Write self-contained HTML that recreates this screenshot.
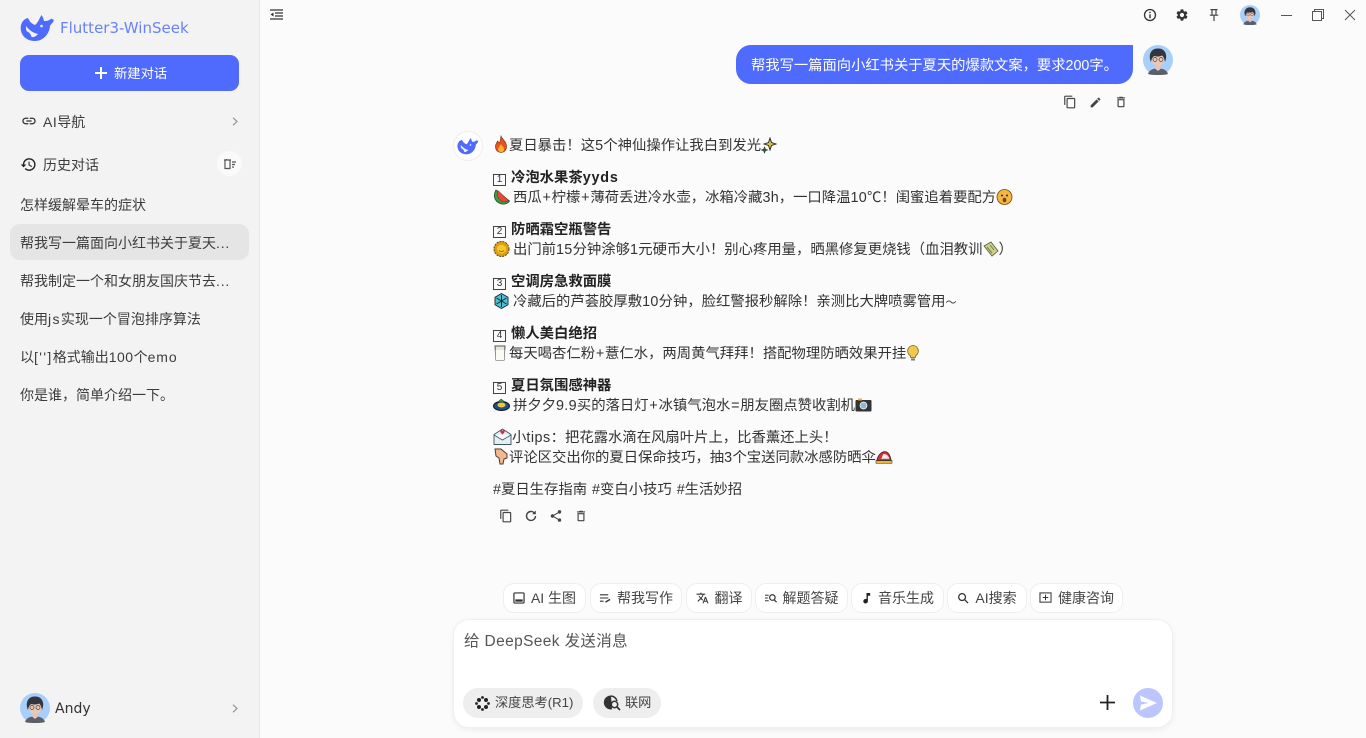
<!DOCTYPE html>
<html lang="zh"><head><meta charset="utf-8"><title>Flutter3-WinSeek</title>
<style>
*{box-sizing:border-box}
html,body{margin:0;width:1366px;height:738px;overflow:hidden;background:#fbfbfb;font-family:"Liberation Sans","Noto Sans CJK SC",sans-serif;color:#333;font-size:14px}
.a{position:absolute}
.t{position:absolute;white-space:nowrap;line-height:20px;height:20px;color:#333;font-size:14.35px;margin-top:1px}
.t svg{display:inline-block;vertical-align:-3px}
.b{font-weight:700;color:#222}
.p{padding:0 .8px}
.d{letter-spacing:.3px}
#side{left:0;top:0;width:260px;height:738px;background:#f3f3f3;border-right:1px solid #e8e8e8}
.h{left:20px;color:#3c3c3c;font-size:14px;line-height:20px;white-space:nowrap}
.chip{position:absolute;top:583px;height:30px;border:1px solid #eeeeee;border-radius:11px;background:#fff;display:flex;align-items:center;justify-content:center;gap:6px;font-size:14px;color:#444;white-space:nowrap}
.pill{position:absolute;top:688px;height:30px;border-radius:15px;background:#eeeeee;display:flex;align-items:center;font-size:14px;color:#444;white-space:nowrap}
.pill span{font-size:13.2px;position:relative;top:-1.5px}
.num{display:inline-block;width:13px;height:12px;border:1px solid #444;font:400 10px/10px "Liberation Sans",sans-serif;text-align:center;vertical-align:0;margin:0 5px 0 0;color:#333}
svg{display:block;overflow:visible}
</style></head><body>
<svg width="0" height="0" style="position:absolute"><defs>
<symbol id="av" viewBox="0 0 30 30"><circle cx="15" cy="15" r="15" fill="#a8cffc"/><path d="M5 29c1-4 5-5.500 10-5.500s9 1.500 10 5.500c-3 1-6.500 1-10 1s-7 0-10-1z" fill="#5b6068"/><path d="M12.500 18h5v6l-2.500 2-2.500-2z" fill="#e8c4b4"/><ellipse cx="15" cy="14" rx="6.500" ry="7" fill="#e9c8b8"/><path d="M8 17C4.500 9 9 3 15 3.500c6-.5 10.500 5.500 7 13.500-.5-3-1.500-5.500-3-6.500-3 1.500-6 1-7.500.5C10 11.500 8.500 13.500 8 17z" fill="#33353f"/><circle cx="12" cy="14.500" r="2" fill="none" stroke="#444" stroke-width=".7"/><circle cx="18" cy="14.500" r="2" fill="none" stroke="#444" stroke-width=".7"/></symbol>
<symbol id="wh" viewBox="0 0 35 27"><path d="M.7 13C.7 8 3.500 4 8 3c1.500 3.500 4 6 7 7 3-2 4-6 6.500-10 1.500 2 2 4 2.500 6 2 0 5 0 7-2.500L34 5c-1 3-3 4-4 6-.5 7-6 15-15 15C7 26 .7 21 .7 13z" fill="#4f6bfe"/><path d="M6 11c3 4 7 7 12 8-2.500 3-5 3.500-6.500 3-.5-3-2.500-5-4.500-5.500-1-1.500-1.200-3.500-1-5.500z" fill="#f3f3f3"/><circle cx="21.500" cy="11" r="1.300" fill="#f3f3f3"/></symbol>
<symbol id="copy" viewBox="0 0 24 24"><path d="M16 1H4c-1.100 0-2 .9-2 2v14h2V3h12V1zm3 4H8c-1.100 0-2 .9-2 2v14c0 1.100.9 2 2 2h11c1.100 0 2-.9 2-2V7c0-1.100-.9-2-2-2zm0 16H8V7h11v14z" fill="#444"/></symbol>
<symbol id="del" viewBox="0 0 24 24"><path d="M6 19c0 1.100.9 2 2 2h8c1.100 0 2-.9 2-2V7H6v12zM8 9h8v10H8V9zm7.500-5-1-1h-5l-1 1H5v2h14V4z" fill="#444"/></symbol>
<symbol id="chev" viewBox="0 0 6 9"><path d="M1 .7 5 4.500 1 8.300" fill="none" stroke="#9a9a9a" stroke-width="1.300"/></symbol>
</defs></svg>

<div id="side" class="a">
<svg class="a" style="left:20px;top:15px" width="35" height="27"><use href="#wh"/></svg>
<div class="a" style="left:60px;top:18px;line-height:20px;color:#6a82f8;font-family:'DejaVu Sans',sans-serif;font-size:15px;white-space:nowrap">Flutter3-WinSeek</div>
<div class="a" style="left:20px;top:55px;width:219px;height:36px;background:#4f6bfe;border-radius:9px"></div>
<svg class="a" style="left:95px;top:67px" width="12" height="12"><path d="M6 0v12M0 6h12" stroke="#fff" stroke-width="2"/></svg>
<div class="a" style="left:114px;top:64px;color:#fff;line-height:20px;font-size:13.3px;white-space:nowrap">新建对话</div>

<svg class="a" style="left:21px;top:113px" width="16" height="16" viewBox="0 0 24 24"><path d="M3.900 12c0-1.710 1.390-3.100 3.100-3.100h4V7H7c-2.760 0-5 2.240-5 5s2.240 5 5 5h4v-1.900H7c-1.710 0-3.100-1.390-3.100-3.100zM8 13h8v-2H8v2zm9-6h-4v1.900h4c1.710 0 3.100 1.390 3.100 3.100s-1.390 3.100-3.100 3.100h-4V17h4c2.760 0 5-2.240 5-5s-2.240-5-5-5z" fill="#333"/></svg>
<div class="a h" style="left:43px;top:112px"><span style="letter-spacing:.5px">AI</span>导航</div>
<svg class="a" style="left:232px;top:117px" width="6" height="9"><use href="#chev"/></svg>
<svg class="a" style="left:20px;top:156px" width="17" height="17" viewBox="0 0 24 24"><path d="M13 3a9 9 0 0 0-9 9H1l3.890 3.890.07.140L9 12H6a7 7 0 1 1 2.050 4.950l-1.420 1.420A9 9 0 1 0 13 3zm-1 5v5l4.280 2.540.72-1.210-3.500-2.080V8H12z" fill="#222"/></svg>
<div class="a h" style="left:43px;top:155px">历史对话</div>
<div class="a" style="left:217px;top:151px;width:25px;height:25px;border-radius:50%;background:#fafafa"></div>
<svg class="a" style="left:224px;top:159px" width="12" height="10" viewBox="0 0 12 10"><path d="M0 1h7M1 1.500V9.500H6V1.500M2.500 1V0M8 3h4M8 5.500h3M8 8h2" fill="none" stroke="#555" stroke-width="1.200"/></svg>

<div class="a" style="left:10px;top:224px;width:239px;height:36px;border-radius:10px;background:#e5e5e5"></div>
<div class="a h" style="top:195px">怎样缓解晕车的症状</div>
<div class="a h" style="top:233px">帮我写一篇面向小红书关于夏天<span style="letter-spacing:.8px">...</span></div>
<div class="a h" style="top:271px">帮我制定一个和女朋友国庆节去<span style="letter-spacing:.8px">...</span></div>
<div class="a h" style="top:309px">使用<span style="letter-spacing:1.4px">js</span>实现一个冒泡排序算法</div>
<div class="a h" style="top:347px">以<span style="letter-spacing:1.4px">['']</span>格式输出<span style="letter-spacing:.5px">100</span>个<span style="letter-spacing:.9px">emo</span></div>
<div class="a h" style="top:385px">你是谁，简单介绍一下。</div>

<svg class="a" style="left:20px;top:693px" width="30" height="30"><use href="#av"/></svg>
<div class="a" style="left:55px;top:699px;line-height:20px;color:#333;font-family:'DejaVu Sans',sans-serif;font-size:14px">Andy</div>
<svg class="a" style="left:232px;top:704px" width="6" height="9"><use href="#chev"/></svg>
</div>

<svg class="a" style="left:269px;top:8px" width="14" height="14" viewBox="0 0 14 14"><path d="M1 2h13M6 5h8M6 8h8M1 11h13" stroke="#333" stroke-width="1.200"/><path d="M4.500 4.500 1.500 6.500l3 2z" fill="#333"/></svg>

<svg class="a" style="left:1143px;top:8px" width="14" height="14" viewBox="0 0 14 14"><circle cx="7" cy="7" r="5.500" fill="none" stroke="#333" stroke-width="1.300"/><path d="M7 6.200v4M7 3.800v1.300" stroke="#333" stroke-width="1.400"/></svg>
<svg class="a" style="left:1175px;top:8px" width="14" height="14" viewBox="0 0 24 24"><path d="M19.140 12.940c.04-.3.060-.61.060-.94 0-.32-.02-.64-.07-.94l2.030-1.580a.49.49 0 0 0 .12-.61l-1.920-3.320a.49.49 0 0 0-.59-.22l-2.390.96c-.5-.38-1.030-.7-1.620-.94l-.36-2.540a.48.48 0 0 0-.48-.41h-3.840a.48.48 0 0 0-.47.41l-.36 2.540c-.59.24-1.130.57-1.620.94l-2.390-.96a.48.48 0 0 0-.59.22L2.740 8.870a.48.48 0 0 0 .12.61l2.030 1.580c-.05.3-.09.63-.09.94s.02.64.07.94l-2.030 1.580a.49.49 0 0 0-.12.61l1.920 3.320c.12.22.37.29.59.22l2.390-.96c.5.38 1.030.7 1.620.94l.36 2.540c.05.24.24.41.48.41h3.840c.24 0 .44-.17.47-.41l.36-2.540c.59-.24 1.130-.56 1.620-.94l2.390.96c.22.08.47 0 .59-.22l1.920-3.320a.48.48 0 0 0-.12-.61l-2.010-1.580zM12 15.600a3.600 3.600 0 1 1 0-7.200 3.600 3.600 0 0 1 0 7.200z" fill="#333"/></svg>
<svg class="a" style="left:1209px;top:9px" width="10" height="12" viewBox="0 0 10 12"><path d="M1.500 .6h7M3 .6v5M7 .6v5M.8 6.200h8.400M5 6.200V12" fill="none" stroke="#444" stroke-width="1.200"/></svg>
<svg class="a" style="left:1240px;top:5px" width="20" height="20"><use href="#av"/></svg>
<svg class="a" style="left:1281px;top:15px" width="11" height="1"><path d="M0 .5h11" stroke="#555"/></svg>
<svg class="a" style="left:1312px;top:9px" width="12" height="12" viewBox="0 0 12 12"><path d="M.5 2.500h9v9h-9zM2.500 2.500V.5h9v9H9.500" fill="none" stroke="#555"/></svg>
<svg class="a" style="left:1345px;top:10px" width="10" height="10"><path d="M0 0l10 10M10 0L0 10" stroke="#555"/></svg>

<div class="a" style="left:736px;top:45px;width:397px;height:39px;background:#4f6bfe;border-radius:15px 0 15px 15px"></div>
<div class="a" style="left:751px;top:56px;color:#fff;line-height:20px;white-space:nowrap;font-size:14.3px">帮我写一篇面向小红书关于夏天的爆款文案，要求200字。</div>
<svg class="a" style="left:1143px;top:45px" width="30" height="30"><use href="#av"/></svg>
<svg class="a" style="left:1063px;top:95px" width="14" height="14"><use href="#copy"/></svg>
<svg class="a" style="left:1089px;top:96px" width="13" height="13" viewBox="0 0 24 24"><path d="M3 17.250V21h3.750L17.810 9.940l-3.750-3.750L3 17.250zM20.710 7.040a1 1 0 0 0 0-1.410l-2.340-2.340a1 1 0 0 0-1.410 0l-1.830 1.830 3.750 3.750 1.830-1.830z" fill="#444"/></svg>
<svg class="a" style="left:1114px;top:95px" width="14" height="14"><use href="#del"/></svg>

<div class="a" style="left:453px;top:131px;width:30px;height:30px;border-radius:50%;background:#fff;border:1px solid #eee"></div>
<svg class="a" style="left:457px;top:138px" width="22" height="17"><use href="#wh"/></svg>

<div class="t" style="left:493px;top:135px"><svg width="16" height="17" viewBox="0 0 16 17"><path d="M8 0c1 3 5 5 5.500 9.500C14 14 11 16.500 8 16.500S2 14 2.500 9.500C3 7.500 4 6.500 4.500 5 5.500 6 6 6.500 6.500 7 7.500 5 7.500 2.500 8 0z" fill="#e8531d" stroke="#7a2a10" stroke-width=".6"/><path d="M8 8c1 2 3 3 3 5.500S9 16 8 16s-3-1-3-2.500S7 10 8 8z" fill="#fbb034"/></svg>夏日暴击！这<span class="d">5</span>个神仙操作让我白到发光<svg width="17" height="16" viewBox="0 0 17 16"><path d="M9 1l1.500 4.500L15 7l-4.500 1.500L9 13 7.500 8.500 3 7l4.500-1.500z" fill="#d8c63e" stroke="#222" stroke-width=".9"/><path d="M3.500 10l.9 2.200 2.100.8-2.100.8-.9 2.200-.9-2.200L.5 13l2.100-.8z" fill="#2f6f35" stroke="#222" stroke-width=".6"/></svg></div>

<div class="t b" style="left:493px;top:167px"><span class="num">1</span>冷泡水果茶<span style="letter-spacing:.8px">yyds</span></div>
<div class="t" style="left:493px;top:187px"><svg width="17" height="16" viewBox="0 0 17 16" style="margin-right:3px"><path d="M3 1c-3 5-2 11 4 13.500 4 1.500 8 0 9.500-2.500z" fill="#3d9b45" stroke="#1d4d22" stroke-width=".8"/><path d="M5 1.500C3.500 6 5 10 8.500 12c2.500 1.200 5 1 7-.5z" fill="#e8483c" stroke="#7a2018" stroke-width=".5"/></svg>西瓜<span class="p">+</span>柠檬<span class="p">+</span>薄荷丢进冷水壶，冰箱冷藏<span class="d">3</span>h，一口降温<span class="d">10</span>℃！闺蜜追着要配方<svg width="17" height="16" viewBox="0 0 17 16"><circle cx="8.500" cy="8" r="7.500" fill="#f4b63f" stroke="#6b4a12" stroke-width=".8"/><circle cx="6" cy="6.500" r="1" fill="#222"/><circle cx="11" cy="6.500" r="1" fill="#222"/><ellipse cx="8.500" cy="11" rx="1.800" ry="2.200" fill="#7a3a1a"/></svg></div>

<div class="t b" style="left:493px;top:219px"><span class="num">2</span>防晒霜空瓶警告</div>
<div class="t" style="left:493px;top:239px"><svg width="17" height="16" viewBox="0 0 17 16" style="margin-right:3px"><circle cx="8.500" cy="8" r="7.500" fill="#d9a013" stroke="#5b4510" stroke-width="1" stroke-dasharray="2 1"/><circle cx="8.500" cy="8" r="4.500" fill="#f6c82b"/><path d="M6 9.500c1.500 1.500 3.500 1.500 5 0" fill="none" stroke="#5b4510" stroke-width=".8"/></svg>出门前<span class="d">15</span>分钟涂够<span class="d">1</span>元硬币大小！别心疼用量，晒黑修复更烧钱（血泪教训<svg width="16" height="16" viewBox="0 0 16 16"><path d="M1 5l7-4 7 9-6 5z" fill="#d4ce8c" stroke="#4d5a35" stroke-width=".8"/><path d="M4 6l5 6M7 4l4 5" stroke="#63894a"/></svg>）</div>

<div class="t b" style="left:493px;top:271px"><span class="num">3</span>空调房急救面膜</div>
<div class="t" style="left:493px;top:291px"><svg width="17" height="16" viewBox="0 0 17 16" style="margin-right:3px"><path d="M8.500.5l6.500 3.700v7.600L8.500 15.500 2 11.800V4.200z" fill="#4cc0d0" stroke="#123" stroke-width=".9"/><path d="M8.500 2v12M3.500 5l10 6M13.500 5l-10 6" stroke="#0d2a38" stroke-width="1"/></svg>冷藏后的芦荟胶厚敷<span class="d">10</span>分钟，脸红警报秒解除！亲测比大牌喷雾管用<span style="font-size:11px">～</span></div>

<div class="t b" style="left:493px;top:323px"><span class="num">4</span>懒人美白绝招</div>
<div class="t" style="left:493px;top:343px"><svg width="15" height="16" viewBox="0 0 15 16" style="margin-right:1px"><path d="M2 1h10l-1 14H3z" fill="#e6e6e0" stroke="#555" stroke-width="1"/><path d="M2.500 5h9L11 15H3z" fill="#fbfbf6"/></svg>每天喝杏仁粉<span class="p">+</span>薏仁水，两周黄气拜拜！搭配物理防晒效果开挂<svg width="14" height="16" viewBox="0 0 14 16"><path d="M7 .5a5.500 5.500 0 0 0-3 10c.5.500.7 1.500.7 2h4.600c0-.5.200-1.500.7-2a5.500 5.500 0 0 0-3-10z" fill="#f2c94c" stroke="#6c5a1a" stroke-width=".8"/><path d="M5 13.500h4v2H5z" fill="#777"/></svg></div>

<div class="t b" style="left:493px;top:375px"><span class="num">5</span>夏日氛围感神器</div>
<div class="t" style="left:493px;top:395px"><svg width="17" height="16" viewBox="0 0 17 16" style="margin-right:3px"><ellipse cx="8.500" cy="9" rx="8" ry="4.500" fill="#1d4f8a" stroke="#111"/><ellipse cx="8.500" cy="8" rx="4" ry="2.500" fill="#e9c93b"/><path d="M5 5l3-3 4 3z" fill="#3b9b4a" stroke="#111" stroke-width=".5"/></svg>拼夕夕<span class="d">9.9</span>买的落日灯<span class="p">+</span>冰镇气泡水<span class="p">=</span>朋友圈点赞收割机<svg width="17" height="16" viewBox="0 0 17 16"><rect x=".5" y="3" width="16" height="11.500" rx="1" fill="#333"/><circle cx="8.500" cy="8.500" r="3.500" fill="#8fb7d8" stroke="#fff" stroke-width=".7"/><path d="M3 1.500h4v2H3z" fill="#f0b23a"/></svg></div>

<div class="t" style="left:493px;top:427px"><svg width="19" height="17" viewBox="0 0 19 17"><path d="M1 6.500L9.500 1l8.500 5.500v10H1z" fill="#e5eef5" stroke="#3d5465" stroke-width=".9"/><path d="M1 7l8.500 5L18 7" fill="#fff" stroke="#3d5465" stroke-width=".8"/><path d="M9.500 6.500C6.500 4 7 2 8.300 2c.7 0 1.200.7 1.200 1 0-.3.500-1 1.200-1 1.300 0 1.800 2-1.200 4.500z" fill="#d92b3a"/></svg>小<span style="letter-spacing:.5px">tips</span>：把花露水滴在风扇叶片上，比香薰还上头！</div>
<div class="t" style="left:493px;top:447px"><svg width="16" height="17" viewBox="0 0 16 17"><path d="M2 1h6l6 5v4l-3 1-1 5H7l-1-6-3-2z" fill="#f0b993" stroke="#5a3a22" stroke-width="1"/></svg>评论区交出你的夏日保命技巧，抽<span class="d">3</span>个宝送同款冰感防晒伞<svg width="16" height="16" viewBox="0 0 18 16"><path d="M1 12C2 5 7 2 10 2s6 3 7 10z" fill="#d92b3a" stroke="#222" stroke-width=".8"/><path d="M8 5c3-1 6 1 7 5H6z" fill="#f3f0e6"/><path d="M0 12h18v3H0z" fill="#e7b93a" stroke="#222" stroke-width=".6"/></svg></div>

<div class="t" style="left:493px;top:479px;word-spacing:1px">#夏日生存指南 #变白小技巧 #生活妙招</div>

<svg class="a" style="left:499px;top:509px" width="14" height="14"><use href="#copy"/></svg>
<svg class="a" style="left:524px;top:509px" width="14" height="14" viewBox="0 0 14 14"><path d="M11.500 7a4.500 4.500 0 1 1-1.300-3.200" fill="none" stroke="#444" stroke-width="1.400"/><path d="M11.800 1.500v3.700H8.100z" fill="#444"/></svg>
<svg class="a" style="left:549px;top:509px" width="14" height="14" viewBox="0 0 24 24"><path d="M18 16.080c-.76 0-1.440.3-1.960.77L8.910 12.700c.05-.23.090-.46.090-.7s-.04-.47-.09-.7l7.050-4.110A2.990 2.990 0 0 0 21 5a3 3 0 1 0-6 0c0 .24.040.47.090.7L8.040 9.810A3 3 0 1 0 8.040 14.200l7.120 4.160c-.05.21-.08.43-.08.65A2.920 2.920 0 1 0 18 16.080z" fill="#444"/></svg>
<svg class="a" style="left:574px;top:509px" width="14" height="14"><use href="#del"/></svg>

<div class="chip" style="left:503px;width:83px"><svg width="12" height="12" viewBox="0 0 13 13"><rect x="1" y="1" width="11" height="11" rx="1" fill="none" stroke="#333" stroke-width="1.300"/><path d="M2.500 10.500h8V8H2.500z" fill="#333"/></svg><span>AI 生图</span></div>
<div class="chip" style="left:590px;width:92px"><svg width="12" height="12" viewBox="0 0 13 13"><path d="M1 3h9M1 6.500h9M1 10h4" stroke="#333" stroke-width="1.200"/><path d="M7 11l5-3" stroke="#333" stroke-width="1.500"/></svg><span>帮我写作</span></div>
<div class="chip" style="left:686px;width:66px"><svg width="13" height="12" viewBox="0 0 24 22"><path d="M12.870 14.070l-2.540-2.510.03-.03A17.500 17.500 0 0 0 14.070 5H17V3h-7V1H8v2H1v2h11.170C11.500 6.920 10.440 8.750 9 10.350 8.070 9.320 7.300 8.190 6.690 7h-2c.73 1.630 1.730 3.170 2.980 4.560l-5.090 5.020L4 18l5-5 3.110 3.110.76-2.040zM18.500 9h-2L12 21h2l1.120-3h4.750L21 21h2l-4.500-12zm-2.620 7l1.620-4.330L19.120 16h-3.240z" fill="#333"/></svg><span>翻译</span></div>
<div class="chip" style="left:755px;width:93px"><svg width="12" height="12" viewBox="0 0 13 13"><path d="M0 3.500h4M0 6.500h3M0 9.500h4" stroke="#333"/><circle cx="8" cy="6" r="3" fill="none" stroke="#333" stroke-width="1.300"/><path d="M10 8.500l2.500 2.500" stroke="#333" stroke-width="1.300"/></svg><span>解题答疑</span></div>
<div class="chip" style="left:851px;width:93px"><svg width="11" height="12" viewBox="0 0 12 13"><path d="M6 1h4v3H7.500v6a2.500 2.500 0 1 1-1.500-2.300z" fill="#222"/></svg><span>音乐生成</span></div>
<div class="chip" style="left:947px;width:80px"><svg width="12" height="12" viewBox="0 0 13 13"><circle cx="5.500" cy="5.500" r="3.700" fill="none" stroke="#333" stroke-width="1.400"/><path d="M8.300 8.300l3.700 3.700" stroke="#333" stroke-width="1.400"/></svg><span>AI搜索</span></div>
<div class="chip" style="left:1030px;width:93px"><svg width="13" height="12" viewBox="0 0 14 13"><rect x="1" y="1" width="12" height="10" fill="none" stroke="#333" stroke-width="1.100"/><path d="M7 3v6M4 6h6" stroke="#333" stroke-width="1.100"/></svg><span>健康咨询</span></div>

<div class="a" style="left:453px;top:619px;width:720px;height:109px;background:#fff;border-radius:16px;border:1px solid #f0f0f0;box-shadow:0 2px 6px rgba(0,0,0,.06)"></div>
<div class="a" style="left:464px;top:632px;font-size:15.5px;line-height:20px;color:#555;white-space:nowrap;letter-spacing:.37px">给 DeepSeek 发送消息</div>
<div class="pill" style="left:463px;width:120px;padding-left:12px"><svg width="15" height="15" viewBox="0 0 15 15" style="margin-right:5px"><g fill="#222"><circle cx="7.500" cy="1.500" r="1.400"/><circle cx="7.500" cy="13.500" r="1.400"/><circle cx="1.500" cy="7.500" r="1.400"/><circle cx="13.500" cy="7.500" r="1.400"/><circle cx="4" cy="4" r="2"/><circle cx="11" cy="4" r="2"/><circle cx="4" cy="11" r="2"/><circle cx="11" cy="11" r="2"/></g></svg><span>深度思考(R1)</span></div>
<div class="pill" style="left:593px;width:68px;padding-left:11px"><svg width="17" height="16" viewBox="0 0 17 16" style="margin-right:4px"><path d="M7 .5a7 7 0 1 0 1 13.900" fill="#333"/><path d="M7 1a6.500 6.500 0 0 1 6 5" fill="none" stroke="#333" stroke-width="1.500"/><circle cx="10.500" cy="9.500" r="3.200" fill="#eee" stroke="#333" stroke-width="1.500"/><path d="M13 12l3 3" stroke="#333" stroke-width="1.700"/></svg><span>联网</span></div>
<svg class="a" style="left:1100px;top:695px" width="15" height="15"><path d="M7.500 0v15M0 7.500h15" stroke="#222" stroke-width="1.800"/></svg>
<div class="a" style="left:1133px;top:688px;width:30px;height:30px;border-radius:50%;background:#bcc6fe"></div>
<svg class="a" style="left:1139px;top:695px" width="19" height="16" viewBox="0 0 19 16"><path d="M1 .5l17 7.500L1 15.500l1-6 8-1.500-8-1.500z" fill="#fff"/></svg>
</body></html>
